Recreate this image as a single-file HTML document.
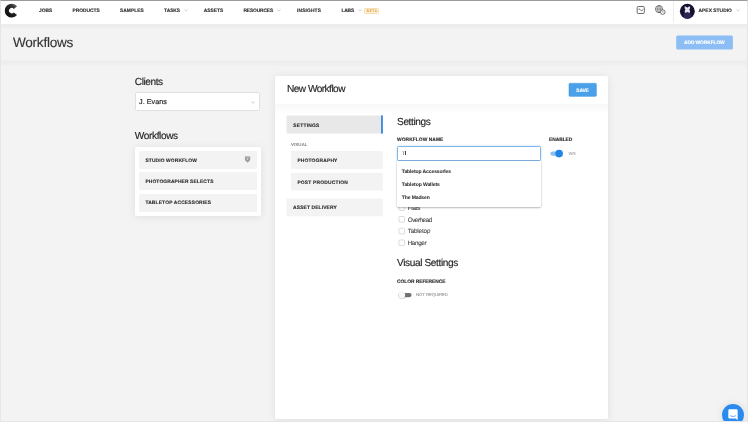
<!DOCTYPE html>
<html lang="en">
<head>
<meta charset="utf-8">
<title>Workflows</title>
<style>
*{box-sizing:border-box;margin:0;padding:0}
html,body{width:748px;height:422px;overflow:hidden;background:#f3f3f3;font-family:"Liberation Sans",sans-serif;color:#222;text-rendering:geometricPrecision}
.a{position:absolute;white-space:nowrap}
#frame{left:0;top:0;width:748px;height:422px;border:1px solid #e6e6e6;border-top:1px solid #9b9b9b;z-index:50}
.card{background:#fff;box-shadow:0 1px 8px rgba(0,0,0,.085);border-radius:2px}
.item{background:#f3f3f3;border-radius:1px}
.cb{width:6.4px;height:6.4px;border:.8px solid #c9c9c9;border-radius:1px;background:#fff}
#root{position:absolute;left:0;top:0;width:748px;height:422px;overflow:hidden;will-change:transform}
</style>
</head>
<body>
<div id="root">
<div id="frame" class="a"></div>

<!-- NAV -->
<div class="a" style="left:1px;top:60px;width:746px;height:6px;background:linear-gradient(to bottom,#f3f3f3 0,#f3f3f3 8%,#ececec 9%,#efefef 80%,#f3f3f3 100%)"></div>
<div class="a" style="left:1px;top:1px;width:746px;height:22px;background:#fff"></div>
<svg class="a" style="left:0;top:0" width="24" height="24" viewBox="0 0 24 24">
  <defs><linearGradient id="lg" x1="1" y1="0" x2="0.2" y2="1"><stop offset="0" stop-color="#777"/><stop offset=".35" stop-color="#2a2a2a"/><stop offset="1" stop-color="#0c0c0c"/></linearGradient></defs>
  <path d="M17.07 6.18 A6.95 6.95 0 1 0 17.07 15.12 L13.82 12.39 A2.7 2.7 0 1 1 13.82 8.91 Z" fill="url(#lg)"/>
</svg>
<svg class="a" style="left:183.7px;top:9.2px" width="4" height="2.6" viewBox="0 0 4 2.6"><path d="M.3 .4 L2 2.1 L3.7 .4" fill="none" stroke="#b5b5b5" stroke-width=".6"/></svg>
<svg class="a" style="left:276.8px;top:9.2px" width="4" height="2.6" viewBox="0 0 4 2.6"><path d="M.3 .4 L2 2.1 L3.7 .4" fill="none" stroke="#b5b5b5" stroke-width=".6"/></svg>
<svg class="a" style="left:357.5px;top:9.2px" width="4" height="2.6" viewBox="0 0 4 2.6"><path d="M.3 .4 L2 2.1 L3.7 .4" fill="none" stroke="#b5b5b5" stroke-width=".6"/></svg>
<svg class="a" style="left:735.5px;top:9.2px" width="4" height="2.6" viewBox="0 0 4 2.6"><path d="M.3 .4 L2 2.1 L3.7 .4" fill="none" stroke="#b5b5b5" stroke-width=".6"/></svg>
<div class="a" style="left:364.3px;top:7.5px;width:14.6px;height:6px;background:#fdf4de;border:.5px solid #f6dfae;border-radius:1.3px"></div>

<svg class="a" style="left:620px;top:0" width="128" height="24" viewBox="620 0 128 24">
  <rect x="637.2" y="6.5" width="7.1" height="7" rx="1" fill="none" stroke="#505050" stroke-width=".85"/>
  <path d="M638.9 9.1 L640 9.3 L641.4 10.9 L642.9 9.7" fill="none" stroke="#505050" stroke-width=".8" stroke-linecap="round" stroke-linejoin="round"/>
  <circle cx="659.05" cy="9.1" r="3.55" fill="none" stroke="#505050" stroke-width=".8"/>
  <ellipse cx="659.05" cy="9.1" rx="1.6" ry="3.55" fill="none" stroke="#505050" stroke-width=".55"/>
  <path d="M655.5 9.1 H662.6 M659.05 5.5 V12.7" fill="none" stroke="#505050" stroke-width=".55"/>
  <circle cx="662.75" cy="12.15" r="2.3" fill="#fff" stroke="#505050" stroke-width=".8"/>
  <path d="M662.75 11 V12.3 L663.5 12.7" fill="none" stroke="#505050" stroke-width=".55"/>
  <circle cx="687.35" cy="11.2" r="7.45" fill="#17122f"/>
  <ellipse cx="687.35" cy="15.6" rx="3.9" ry="3.2" fill="#2c2656"/>
  <path d="M684.6 6.6 Q685.9 6.3 687.35 7.7 Q688.8 6.3 690.1 6.6 Q690.4 8.6 689.3 9.7 Q690.3 10.9 690 12.6 Q688.6 13 687.35 11.9 Q686.1 13 684.7 12.6 Q684.4 10.9 685.4 9.7 Q684.3 8.6 684.6 6.6 Z" fill="#e6e2f3"/>
</svg>
<div class="a" style="left:672.5px;top:1px;width:.8px;height:22.6px;background:#ededed"></div>

<!-- HEADER -->
<div class="a" style="left:1px;top:23px;width:746px;height:5px;background:linear-gradient(to bottom,#fff 0,#fff 12%,#ececec 12.5%,#eeeeee 90%,#f3f3f3 100%)"></div>

<svg class="a" style="left:670px;top:30px" width="70" height="26" viewBox="670 30 70 26"><rect x="676.2" y="35.6" width="56.7" height="13.8" rx="1.5" fill="#8cbdf4"/></svg>

<!-- LEFT COLUMN -->
<div class="a" style="left:134.7px;top:92.3px;width:125.8px;height:19.1px;background:#fff;border:.8px solid #e0e0e0;border-radius:1.5px"></div>
<svg class="a" style="left:251.1px;top:101px" width="4.4" height="2.8" viewBox="0 0 4.4 2.8"><path d="M.3 .4 L2.2 2.3 L4.1 .4" fill="none" stroke="#b0b0b0" stroke-width=".6"/></svg>

<div class="a card" style="left:134.7px;top:146.9px;width:126.1px;height:68.7px"></div>
<div class="a item" style="left:138.8px;top:150.9px;width:117.9px;height:17.9px"></div>
<div class="a item" style="left:138.8px;top:172.3px;width:117.9px;height:17.9px"></div>
<div class="a item" style="left:138.8px;top:193.9px;width:117.9px;height:18px"></div>
<svg class="a" style="left:240px;top:152px" width="14" height="14" viewBox="240 152 14 14"><path d="M244.9 156.2 H250.2 V159.6 Q250.2 161.2 247.55 162.5 Q244.9 161.2 244.9 159.6 Z" fill="#9c9c9c"/><rect x="244.9" y="156.2" width="5.3" height="1.1" fill="#c4c4c4"/><path d="M246.6 158.5 H248.5 L247.55 160.1 Z" fill="#f3f3f3"/></svg>

<!-- RIGHT CARD -->
<div class="a card" style="left:275px;top:76px;width:333px;height:343px"></div>
<div class="a" style="left:275px;top:104px;width:333px;height:10px;background:linear-gradient(#f8f8f8,#fff)"></div>
<svg class="a" style="left:562px;top:78px" width="42" height="24" viewBox="562 78 42 24"><rect x="568.9" y="83.2" width="27.6" height="13.2" rx="1.2" fill="#4aa0e9" stroke="#2f88da" stroke-width=".5" stroke-dasharray="1 .7"/></svg>

<!-- tabs -->
<svg class="a" style="left:280px;top:110px" width="110" height="112" viewBox="280 110 110 112">
<rect x="286.5" y="115.4" width="96.4" height="18.2" rx=".8" fill="#e8e8e8"/>
<rect x="381" y="115.4" width="1.9" height="18.2" fill="#3d8fe0"/>
<rect x="291" y="151.1" width="91.9" height="17.8" rx=".8" fill="#f3f3f3"/>
<rect x="291" y="172.7" width="91.9" height="17.8" rx=".8" fill="#f3f3f3"/>
<rect x="286.5" y="198.5" width="96.4" height="17.8" rx=".8" fill="#f3f3f3"/>
</svg>

<!-- settings -->
<div class="a" style="left:397.1px;top:145.9px;width:144.4px;height:14.7px;background:#fff;border:.9px solid #82b6e6;border-radius:1.5px;box-shadow:0 0 2.5px rgba(74,158,230,.4)"></div>
<div class="a" style="left:404.6px;top:150.9px;width:.5px;height:4.6px;background:#444"></div>
<svg class="a" style="left:545px;top:146px" width="24" height="16" viewBox="545 146 24 16"><rect x="550.3" y="151.4" width="11" height="4.4" rx="2.2" fill="#8cc0f2"/><circle cx="559.1" cy="153.6" r="3.85" fill="#2384e8"/></svg>

<!-- checkboxes -->
<svg class="a" style="left:390px;top:200px" width="20" height="50" viewBox="390 200 20 50"><rect x="399" y="204.8" width="5.6" height="5.6" rx=".9" fill="#fff" stroke="#cdcdcd" stroke-width=".7"/><rect x="399" y="216.5" width="5.6" height="5.6" rx=".9" fill="#fff" stroke="#cdcdcd" stroke-width=".7"/><rect x="399" y="228.3" width="5.6" height="5.6" rx=".9" fill="#fff" stroke="#cdcdcd" stroke-width=".7"/><rect x="399" y="240.0" width="5.6" height="5.6" rx=".9" fill="#fff" stroke="#cdcdcd" stroke-width=".7"/></svg>

<svg class="a" style="left:394px;top:287px" width="24" height="16" viewBox="394 287 24 16"><defs><filter id="ks" x="-50%" y="-50%" width="200%" height="200%"><feGaussianBlur stdDeviation=".5"/></filter></defs><rect x="400.2" y="292.9" width="11.4" height="4.3" rx="2.15" fill="#707070"/><circle cx="401.9" cy="295.2" r="3.5" fill="#000" opacity=".35" filter="url(#ks)"/><circle cx="401.9" cy="295.1" r="3.35" fill="#f8f8f8"/></svg>

<div class="a" style="left:39.10px;top:10px;font-size:4.9px;line-height:4.9px;font-weight:bold;color:#2e2e2e;letter-spacing:-0.043px;-webkit-text-stroke:0.12px">JOBS</div>
<div class="a" style="left:72.50px;top:10px;font-size:4.9px;line-height:4.9px;font-weight:bold;color:#2e2e2e;letter-spacing:-0.022px;-webkit-text-stroke:0.12px">PRODUCTS</div>
<div class="a" style="left:120.00px;top:10px;font-size:4.9px;line-height:4.9px;font-weight:bold;color:#2e2e2e;letter-spacing:0.024px;-webkit-text-stroke:0.12px">SAMPLES</div>
<div class="a" style="left:164.10px;top:10px;font-size:4.9px;line-height:4.9px;font-weight:bold;color:#2e2e2e;letter-spacing:-0.055px;-webkit-text-stroke:0.12px">TASKS</div>
<div class="a" style="left:203.70px;top:10px;font-size:4.9px;line-height:4.9px;font-weight:bold;color:#2e2e2e;letter-spacing:0.004px;-webkit-text-stroke:0.12px">ASSETS</div>
<div class="a" style="left:243.40px;top:10px;font-size:4.9px;line-height:4.9px;font-weight:bold;color:#2e2e2e;letter-spacing:-0.148px;-webkit-text-stroke:0.12px">RESOURCES</div>
<div class="a" style="left:297.10px;top:10px;font-size:4.9px;line-height:4.9px;font-weight:bold;color:#2e2e2e;letter-spacing:0.113px;-webkit-text-stroke:0.12px">INSIGHTS</div>
<div class="a" style="left:341.50px;top:10px;font-size:4.9px;line-height:4.9px;font-weight:bold;color:#2e2e2e;letter-spacing:-0.209px;-webkit-text-stroke:0.12px">LABS</div>
<div class="a" style="left:698.50px;top:10px;font-size:4.9px;line-height:4.9px;font-weight:bold;color:#2e2e2e;letter-spacing:0.024px;-webkit-text-stroke:0.12px">APEX STUDIO</div>
<div class="a" style="left:366.60px;top:10px;font-size:3.6px;line-height:3.6px;font-weight:bold;color:#e59a3c;letter-spacing:0.328px">BETA</div>
<div class="a" style="left:13.00px;top:36px;font-size:13.6px;line-height:13.6px;font-weight:normal;color:#333333;letter-spacing:-0.269px;-webkit-text-stroke:0.12px">Workflows</div>
<div class="a" style="left:684.10px;top:42px;font-size:4.9px;line-height:4.9px;font-weight:bold;color:#ffffff;letter-spacing:-0.113px;-webkit-text-stroke:0.12px">ADD WORKFLOW</div>
<div class="a" style="left:134.80px;top:78px;font-size:10.1px;line-height:10.1px;font-weight:normal;color:#262626;letter-spacing:-0.427px;-webkit-text-stroke:0.16px">Clients</div>
<div class="a" style="left:139.00px;top:98px;font-size:7.2px;line-height:7.2px;font-weight:normal;color:#2b2b2b;letter-spacing:0.046px;-webkit-text-stroke:0.2px">J. Evans</div>
<div class="a" style="left:134.80px;top:132px;font-size:10.1px;line-height:10.1px;font-weight:normal;color:#262626;letter-spacing:-0.384px;-webkit-text-stroke:0.16px">Workflows</div>
<div class="a" style="left:145.40px;top:160px;font-size:4.9px;line-height:4.9px;font-weight:bold;color:#2b2b2b;letter-spacing:0.120px;-webkit-text-stroke:0.12px">STUDIO WORKFLOW</div>
<div class="a" style="left:145.40px;top:181px;font-size:4.9px;line-height:4.9px;font-weight:bold;color:#2b2b2b;letter-spacing:0.123px;-webkit-text-stroke:0.12px">PHOTOGRAPHER SELECTS</div>
<div class="a" style="left:145.40px;top:202px;font-size:4.9px;line-height:4.9px;font-weight:bold;color:#2b2b2b;letter-spacing:0.158px;-webkit-text-stroke:0.12px">TABLETOP ACCESSORIES</div>
<div class="a" style="left:287.00px;top:85px;font-size:10.1px;line-height:10.1px;font-weight:normal;color:#262626;letter-spacing:-0.530px;-webkit-text-stroke:0.16px">New Workflow</div>
<div class="a" style="left:576.30px;top:90px;font-size:4.9px;line-height:4.9px;font-weight:bold;color:#ffffff;letter-spacing:-0.156px;-webkit-text-stroke:0.12px">SAVE</div>
<div class="a" style="left:293.30px;top:125px;font-size:4.9px;line-height:4.9px;font-weight:bold;color:#2b2b2b;letter-spacing:0.233px;-webkit-text-stroke:0.12px">SETTINGS</div>
<div class="a" style="left:291.00px;top:143px;font-size:4.4px;line-height:4.4px;font-weight:normal;color:#777777;letter-spacing:0.095px;-webkit-text-stroke:0.12px">VISUAL</div>
<div class="a" style="left:297.40px;top:160px;font-size:4.9px;line-height:4.9px;font-weight:bold;color:#2b2b2b;letter-spacing:0.177px;-webkit-text-stroke:0.12px">PHOTOGRAPHY</div>
<div class="a" style="left:297.40px;top:182px;font-size:4.9px;line-height:4.9px;font-weight:bold;color:#2b2b2b;letter-spacing:0.203px;-webkit-text-stroke:0.12px">POST PRODUCTION</div>
<div class="a" style="left:293.10px;top:207px;font-size:4.9px;line-height:4.9px;font-weight:bold;color:#2b2b2b;letter-spacing:0.127px;-webkit-text-stroke:0.12px">ASSET DELIVERY</div>
<div class="a" style="left:397.10px;top:118px;font-size:10.1px;line-height:10.1px;font-weight:normal;color:#262626;letter-spacing:-0.412px;-webkit-text-stroke:0.16px">Settings</div>
<div class="a" style="left:397.10px;top:139px;font-size:4.9px;line-height:4.9px;font-weight:bold;color:#2b2b2b;letter-spacing:0.047px;-webkit-text-stroke:0.12px">WORKFLOW NAME</div>
<div class="a" style="left:549.00px;top:139px;font-size:4.9px;line-height:4.9px;font-weight:bold;color:#2b2b2b;letter-spacing:-0.057px;-webkit-text-stroke:0.12px">ENABLED</div>
<div class="a" style="left:401.80px;top:153px;font-size:4.9px;line-height:4.9px;font-weight:normal;color:#444444;letter-spacing:0.000px">T</div>
<div class="a" style="left:568.20px;top:152px;font-size:4.1px;line-height:4.1px;font-weight:normal;color:#999999;letter-spacing:-0.302px;-webkit-text-stroke:0.11px">YES</div>
<div class="a" style="left:407.70px;top:206px;font-size:6.3px;line-height:6.3px;font-weight:normal;color:#3d3d3d;letter-spacing:-0.214px;-webkit-text-stroke:0.08px">Flats</div>
<div class="a" style="left:407.70px;top:218px;font-size:6.3px;line-height:6.3px;font-weight:normal;color:#3d3d3d;letter-spacing:-0.451px;-webkit-text-stroke:0.08px">Overhead</div>
<div class="a" style="left:407.70px;top:229px;font-size:6.3px;line-height:6.3px;font-weight:normal;color:#3d3d3d;letter-spacing:-0.159px;-webkit-text-stroke:0.08px">Tabletop</div>
<div class="a" style="left:407.70px;top:241px;font-size:6.3px;line-height:6.3px;font-weight:normal;color:#3d3d3d;letter-spacing:-0.371px;-webkit-text-stroke:0.08px">Hanger</div>
<div class="a" style="left:397.00px;top:259px;font-size:10.1px;line-height:10.1px;font-weight:normal;color:#262626;letter-spacing:-0.378px;-webkit-text-stroke:0.16px">Visual Settings</div>
<div class="a" style="left:397.00px;top:281px;font-size:4.9px;line-height:4.9px;font-weight:bold;color:#2b2b2b;letter-spacing:-0.049px;-webkit-text-stroke:0.12px">COLOR REFERENCE</div>
<div class="a" style="left:416.10px;top:293px;font-size:4.2px;line-height:4.2px;font-weight:normal;color:#999999;letter-spacing:-0.021px;-webkit-text-stroke:0.12px">NOT REQUIRED</div>

<!-- dropdown -->
<div class="a" style="left:397px;top:161px;width:144px;height:46px;background:#fff;box-shadow:0 0 0 .5px rgba(0,0,0,.09),0 1px 2px rgba(0,0,0,.24);border-radius:0 0 1.5px 1.5px"></div>
<div class="a" style="left:401.80px;top:170px;font-size:5.0px;line-height:5.0px;font-weight:bold;color:#2b2b2b;letter-spacing:-0.097px;-webkit-text-stroke:0.04px">Tabletop Accessories</div>
<div class="a" style="left:401.80px;top:183px;font-size:5.0px;line-height:5.0px;font-weight:bold;color:#2b2b2b;letter-spacing:-0.078px;-webkit-text-stroke:0.04px">Tabletop Wallets</div>
<div class="a" style="left:401.80px;top:196px;font-size:5.0px;line-height:5.0px;font-weight:bold;color:#2b2b2b;letter-spacing:-0.101px;-webkit-text-stroke:0.04px">The Madsen</div>

<!-- chat -->
<div class="a" style="left:722px;top:404px;width:22px;height:22px;border-radius:50%;background:#2b8aef;box-shadow:0 0 8px rgba(0,0,0,.1)"></div>
<svg class="a" style="left:727.6px;top:409.2px" width="11" height="11.4" viewBox="0 0 13 13.4"><path d="M1.6 .4 H10 Q11.4 .4 11.4 1.8 V13.2 L9.2 11.2 H1.6 Q.4 11.2 .4 10 V1.6 Q.4 .4 1.6 .4 Z" fill="#fff"/><path d="M2.4 7.8 Q5.9 10.2 9.4 7.8" fill="none" stroke="#2b8aef" stroke-width=".8"/></svg>
</div>
</body>
</html>
